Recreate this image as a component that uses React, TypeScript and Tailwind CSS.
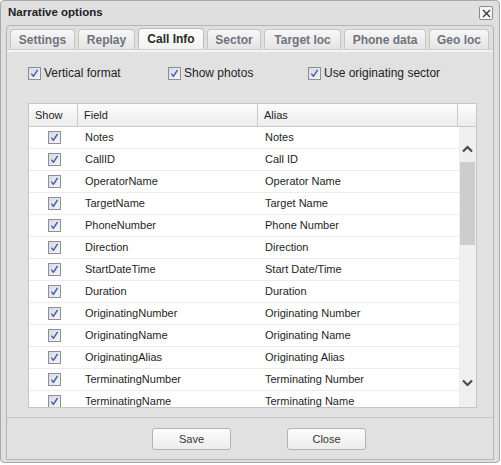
import React from "react";

const rows: [string, string][] = [
  ["Notes", "Notes"],
  ["CallID", "Call ID"],
  ["OperatorName", "Operator Name"],
  ["TargetName", "Target Name"],
  ["PhoneNumber", "Phone Number"],
  ["Direction", "Direction"],
  ["StartDateTime", "Start Date/Time"],
  ["Duration", "Duration"],
  ["OriginatingNumber", "Originating Number"],
  ["OriginatingName", "Originating Name"],
  ["OriginatingAlias", "Originating Alias"],
  ["TerminatingNumber", "Terminating Number"],
  ["TerminatingName", "Terminating Name"],
];

const tabs = [
  { label: "Settings", w: "w-[65px]" },
  { label: "Replay", w: "w-[57px]" },
  { label: "Call Info", w: "w-[66px]", active: true },
  { label: "Sector", w: "w-[54px]" },
  { label: "Target loc", w: "w-[77px]" },
  { label: "Phone data", w: "w-[82px]" },
  { label: "Geo loc", w: "w-[60px]" },
];

function Check() {
  return (
    <svg width="13" height="13" viewBox="0 0 13 13" className="block shrink-0">
      <defs>
        <linearGradient id="cbg" x1="0" y1="0" x2="1" y2="1">
          <stop offset="0" stopColor="#d6d9e0" />
          <stop offset="1" stopColor="#f6f6f8" />
        </linearGradient>
      </defs>
      <rect x="0.5" y="0.5" width="12" height="12" fill="url(#cbg)" stroke="#8d8f93" />
      <path d="M3.4 6.6 L5.4 9.3 L9.6 2.8" fill="none" stroke="#3a5cab" strokeWidth="1.4" strokeLinejoin="round" />
    </svg>
  );
}

function Chevron({ down }: { down?: boolean }) {
  return (
    <svg width="11" height="8" viewBox="0 0 11 8" className="block">
      <path
        d={down ? "M1 1.5 L5.5 6 L10 1.5" : "M1 6.5 L5.5 2 L10 6.5"}
        fill="none"
        stroke="#4a4a4a"
        strokeWidth="2.2"
      />
    </svg>
  );
}

export default function App() {
  return (
    <div className="w-[501px] h-[465px] bg-white" style={{ fontFamily: '"Liberation Sans", Arial, sans-serif' }}>
      <div className="w-[500px] h-[463px] border border-[#a9a9a9] rounded-[4px] bg-[#dfdfdf] flex flex-col">
        {/* title bar */}
        <div className="h-[24px] flex items-center justify-between pl-[7px] pr-[6px]">
          <span className="text-[11.5px] font-bold text-[#222]">Narrative options</span>
          <button className="w-[14px] h-[14px] border border-[#8a8a8a] rounded-[2px] bg-[#f7f7f7] flex items-center justify-center">
            <svg width="9" height="9" viewBox="0 0 9 9">
              <path d="M1 1 L8 8 M8 1 L1 8" stroke="#333" strokeWidth="1.3" />
            </svg>
          </button>
        </div>

        {/* tabs panel */}
        <div className="mx-[5px] mb-[2px] flex-1 border border-[#b5b5b5] rounded-t-[4px] flex flex-col">
          <div className="flex gap-[3px] pl-[3px] pt-[2px] h-[23px] items-end">
            {tabs.map((t) =>
              t.active ? (
                <div
                  key={t.label}
                  className={`${t.w} h-[21px] border border-b-0 border-[#b9b9b9] rounded-t-[4px] bg-gradient-to-b from-[#fdfdfd] to-[#f2f2f2] flex items-center justify-center text-[12px] font-bold text-[#2a2a2a]`}
                >
                  {t.label}
                </div>
              ) : (
                <div
                  key={t.label}
                  className={`${t.w} h-[20px] border border-b-0 border-[#c4c4c4] rounded-t-[4px] bg-gradient-to-b from-[#f7f7f7] to-[#e4e4e4] flex items-center justify-center text-[12px] font-bold text-[#70727c]`}
                >
                  {t.label}
                </div>
              )
            )}
          </div>
          <div className="h-[3px] bg-[#f3f3f3] border-t border-[#cfcfcf]" />

          {/* content */}
          <div className="flex-1 flex flex-col bg-[#e1e1e1]">
            <div className="flex mt-[13px] pl-[21px] h-[16px] items-center text-[12px] text-[#222]">
              {["Vertical format", "Show photos", "Use originating sector"].map((l) => (
                <label key={l} className="w-[140px] flex items-center gap-[3px]">
                  <Check />
                  <span>{l}</span>
                </label>
              ))}
            </div>

            <div className="ml-[21px] mt-[22px] w-[449px] h-[305px] border border-[#c6c6c6] bg-white flex flex-col overflow-hidden text-[11px] text-[#1e1e1e]">
              <div className="h-[23px] flex shrink-0 bg-gradient-to-b from-[#fcfcfc] to-[#ececec] border-b border-[#c9c9c9]">
                <div className="w-[49px] border-r border-[#cbcbcb] pl-[6px] flex items-center">Show</div>
                <div className="w-[180px] border-r border-[#cbcbcb] pl-[6px] flex items-center">Field</div>
                <div className="w-[200px] border-r border-[#cbcbcb] pl-[6px] flex items-center">Alias</div>
                <div className="flex-1" />
              </div>
              <div className="flex flex-1 min-h-0">
                <div className="w-[430px] overflow-hidden">
                  {rows.map(([f, a]) => (
                    <div key={f} className="h-[22px] flex items-center border-b border-[#ececec]">
                      <div className="w-[49px] flex justify-center pl-[1px]">
                        <Check />
                      </div>
                      <div className="w-[180px] pl-[7px]">{f}</div>
                      <div className="w-[200px] pl-[7px]">{a}</div>
                    </div>
                  ))}
                </div>
                <div className="flex-1 bg-[#efefef] flex flex-col items-center pt-[18px]">
                  <Chevron />
                  <div className="w-[15px] h-[83px] bg-[#cdcdcd] mt-[9px]" />
                  <div className="mt-[134px]">
                    <Chevron down />
                  </div>
                </div>
              </div>
            </div>

            <div className="mt-[9px] border-t border-[#c4c4c4]" />
            <div className="flex mt-[10px] pl-[145px] gap-[56px]">
              {["Save", "Close"].map((b) => (
                <button
                  key={b}
                  className="w-[79px] h-[22px] border border-[#b3b3b3] rounded-[3px] bg-gradient-to-b from-[#fbfbfb] to-[#ededed] text-[11px] text-[#333]"
                >
                  {b}
                </button>
              ))}
            </div>
          </div>
        </div>
      </div>
    </div>
  );
}
